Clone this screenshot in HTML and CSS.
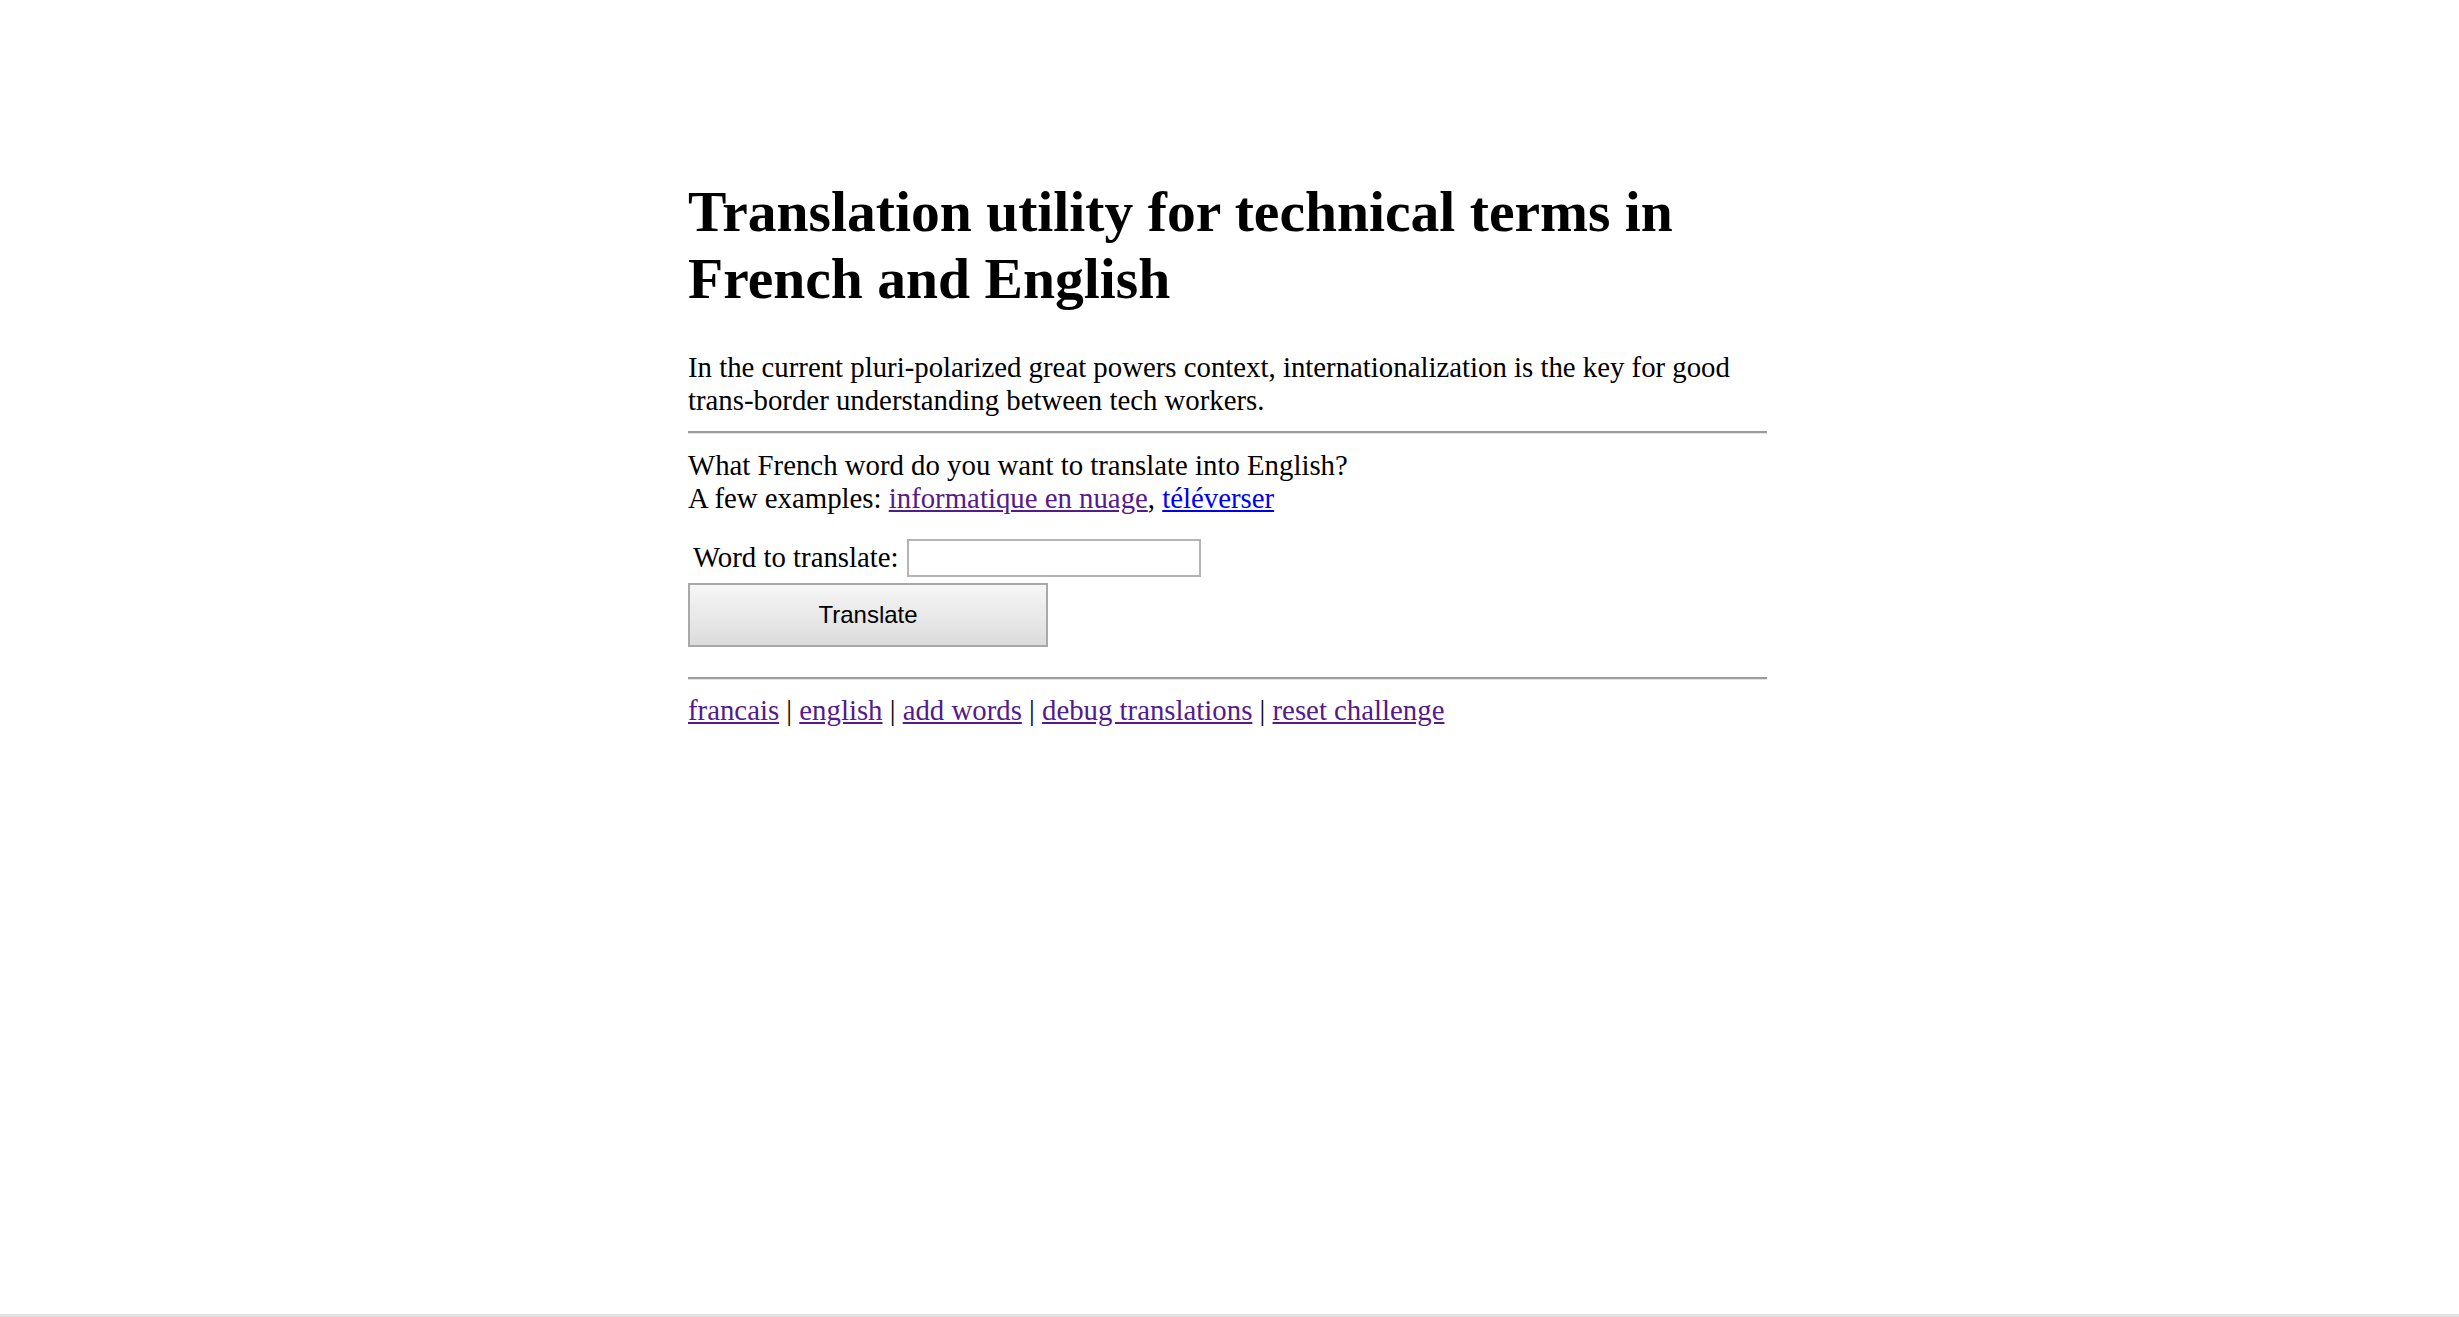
FILE: index.html
```html
<!DOCTYPE html>
<html lang="en">
<head>
<meta charset="utf-8">
<title>Translation utility</title>
<link rel="stylesheet" href="styles.css">
</head>
<body>
<div class="page">
  <h1 class="title">Translation utility for technical terms in French and English</h1>
  <div class="intro">In the current pluri-polarized great powers context, internationalization is the key for good trans-border understanding between tech workers.</div>
  <hr class="rule">
  <div class="question">What French word do you want to translate into English?<br>A few examples: <a class="visited" href="#">informatique en nuage</a>, <a class="fresh" href="#">téléverser</a></div>
  <form class="form">
    <div class="field-row">
      <label class="label" for="word">Word to translate:</label>
      <input class="input" id="word" type="text">
    </div>
    <button class="button" type="button">Translate</button>
  </form>
  <hr class="rule">
  <div class="links"><a class="visited" href="#">francais</a> | <a class="visited" href="#">english</a> | <a class="visited" href="#">add words</a> | <a class="visited" href="#">debug translations</a> | <a class="visited" href="#">reset challenge</a></div>
</div>
<div class="bottom-edge"></div>
</body>
</html>
```
FILE: styles.css
```css
html {
  background: #ffffff;
}
body {
  margin: 0;
  padding-right: 4px;
  min-height: 100vh;
  box-sizing: border-box;
  display: flex;
  flex-direction: column;
  font-family: "Liberation Serif", "Times New Roman", serif;
  font-size: 28.8px;
  color: #000;
}
.page {
  width: 1079px;
  margin: 0 auto;
  padding-top: 178px;
  flex: 1;
}
.title {
  font-size: 57.6px;
  font-weight: bold;
  line-height: 67px;
  margin: 0 0 39px;
}
.intro {
  margin: 0;
}
.rule {
  height: 0;
  margin: 14.4px 0;
  border: 0;
  border-top: 2px solid #9c9c9c;
  border-bottom: 1.6px solid #e4e4e4;
}
.question {
  margin: 0;
}
.visited {
  color: #551a8b;
}
.fresh {
  color: #0000ee;
}
.form {
  margin: 24px 0 30px;
}
.field-row {
  display: flex;
  align-items: center;
  height: 38px;
}
.label {
  padding-left: 5px;
}
.input {
  box-sizing: border-box;
  width: 294px;
  height: 38px;
  margin: 0 0 0 8px;
  border: 2px solid #b4b4b4;
  background: #fff;
  font-size: 24px;
}
.button {
  display: block;
  box-sizing: border-box;
  width: 360px;
  height: 64px;
  margin-top: 6px;
  border: 2px solid #a9a9a9;
  border-radius: 0;
  background: linear-gradient(#f6f6f6, #dcdcdc);
  font-family: "Liberation Sans", Arial, sans-serif;
  font-size: 24px;
  color: #000;
  padding: 0;
}
.links {
  margin: 0;
}
.bottom-edge {
  height: 3px;
  margin-right: -4px;
  background: #e2e2e2;
}
```
